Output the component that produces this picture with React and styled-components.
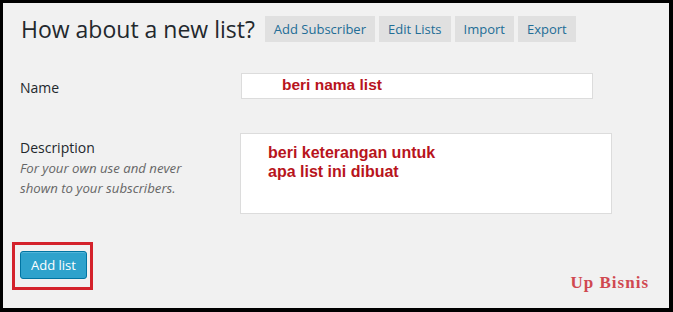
import React from "react";
import styled, { createGlobalStyle } from "styled-components";

const GlobalStyle = createGlobalStyle`
  html, body {
    margin: 0;
    padding: 0;
    background: #000;
  }
  * {
    box-sizing: border-box;
  }
`;

const Frame = styled.div`
  width: 673px;
  height: 312px;
  background: #f1f1f1;
  border-style: solid;
  border-color: #000;
  border-width: 3px 4px 4px 3px;
  padding: 13px 20px 0 17px;
  display: flex;
  flex-direction: column;
  font-family: "Open Sans", "Liberation Sans", sans-serif;
  color: #23282d;
`;

const Header = styled.div`
  display: flex;
  align-items: center;
  height: 26px;
`;

const Title = styled.h2`
  margin: 0 10px 0 1px;
  font-size: 23px;
  font-weight: 400;
  line-height: 29px;
  color: #23282d;
`;

const TabButton = styled.a`
  display: inline-flex;
  align-items: center;
  height: 26px;
  padding: 0 9px;
  margin-right: 4px;
  background: #e0e0e0;
  color: #226d96;
  font-size: 13px;
  text-decoration: none;
`;

const FormGrid = styled.div`
  display: grid;
  grid-template-columns: 221px 1fr;
  row-gap: 34px;
  margin-top: 31px;
`;

const Label = styled.div`
  padding-top: 5px;
  font-size: 14px;
  line-height: 20px;
  color: #23282d;
`;

const Hint = styled.div`
  font-size: 13.2px;
  font-style: italic;
  line-height: 20px;
  color: #666;
`;

const Field = styled.div`
  width: ${(p) => p.$width}px;
  height: ${(p) => p.$height}px;
  margin-left: ${(p) => p.$offset || 0}px;
  background: #fff;
  border: 1px solid #dcdcdc;
  padding: ${(p) => p.$pad};
`;

const Note = styled.div`
  font-family: "Liberation Sans", Arial, sans-serif;
  font-weight: 700;
  font-size: ${(p) => p.$size}px;
  line-height: 19px;
  color: #b8141c;
`;

const Footer = styled.div`
  display: flex;
  justify-content: space-between;
  align-items: flex-end;
  margin-top: 28px;
  margin-left: -8px;
`;

const Highlight = styled.div`
  border: 3px solid #d4222b;
  padding: 6px 3px 8px 5px;
`;

const PrimaryButton = styled.button`
  height: 28px;
  padding: 0 10px;
  background: #2ea2cc;
  border: 1px solid #0074a2;
  border-radius: 3px;
  box-shadow: inset 0 1px 0 rgba(120, 200, 230, 0.5);
  color: #fff;
  font-family: "Open Sans", "Liberation Sans", sans-serif;
  font-size: 13px;
`;

const Brand = styled.div`
  margin-bottom: -3px;
  font-family: "Liberation Serif", "Times New Roman", serif;
  font-weight: 700;
  font-size: 17px;
  letter-spacing: 1px;
  color: #d04850;
`;

export default function App() {
  return (
    <>
      <GlobalStyle />
      <Frame>
        <Header>
          <Title>How about a new list?</Title>
          <TabButton>Add Subscriber</TabButton>
          <TabButton>Edit Lists</TabButton>
          <TabButton>Import</TabButton>
          <TabButton>Export</TabButton>
        </Header>

        <FormGrid>
          <Label>Name</Label>
          <Field $width={352} $height={26} $pad="1px 0 0 40px">
            <Note $size={15.5}>beri nama list</Note>
          </Field>

          <Label>
            Description
            <Hint>
              For your own use and never
              <br />
              shown to your subscribers.
            </Hint>
          </Label>
          <Field $width={372} $height={81} $offset={-1} $pad="9px 0 0 27px">
            <Note $size={16}>
              beri keterangan untuk
              <br />
              apa list ini dibuat
            </Note>
          </Field>
        </FormGrid>

        <Footer>
          <Highlight>
            <PrimaryButton>Add list</PrimaryButton>
          </Highlight>
          <Brand>Up Bisnis</Brand>
        </Footer>
      </Frame>
    </>
  );
}
